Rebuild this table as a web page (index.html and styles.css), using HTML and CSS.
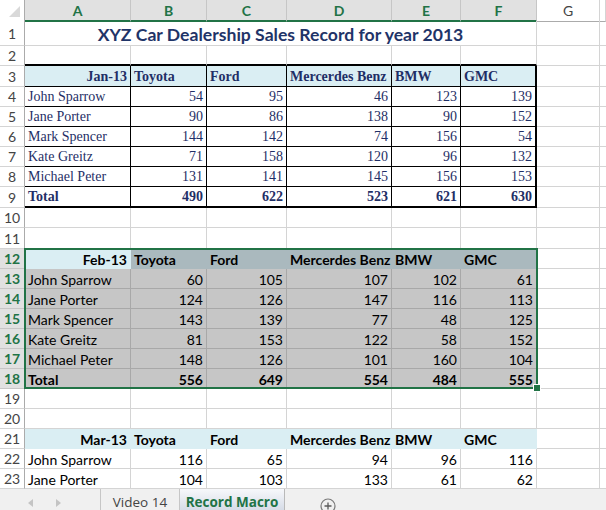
FILE: index.html
```html
<!DOCTYPE html>
<html>
<head>
<meta charset="utf-8">
<link rel="stylesheet" href="styles.css">
</head>
<body>
<div class="sheet">
  <div class="row h21 colhdr">
    <div class="corner"><svg width="25" height="21" viewBox="0 0 25 21"><polygon points="20,6 20,17 9,17" fill="#d9d9d9"/></svg></div>
    <div class="ch sel">A</div><div class="ch sel">B</div><div class="ch sel">C</div><div class="ch sel">D</div><div class="ch sel">E</div><div class="ch sel">F</div><div class="ch">G</div><div class="ch"></div>
  </div>
  <div class="row h25">
    <div class="rh">1</div>
    <div class="c title">XYZ Car Dealership Sales Record for year 2013</div>
    <div class="c"></div><div class="c"></div>
  </div>
  <div class="row h20">
    <div class="rh">2</div>
    <div class="c tb"></div><div class="c tb"></div><div class="c tb"></div><div class="c tb"></div><div class="c tb"></div><div class="c tb"></div><div class="c"></div><div class="c"></div>
  </div>
  <div class="row h21">
    <div class="rh">3</div>
    <div class="c j jh n">Jan-13</div><div class="c j jh">Toyota</div><div class="c j jh">Ford</div><div class="c j jh">Mercerdes Benz</div><div class="c j jh">BMW</div><div class="c j jh jr">GMC</div><div class="c"></div><div class="c"></div>
  </div>
  <div class="row h20">
    <div class="rh">4</div>
    <div class="c j">John Sparrow</div><div class="c j n">54</div><div class="c j n">95</div><div class="c j n">46</div><div class="c j n">123</div><div class="c j n jr">139</div><div class="c"></div><div class="c"></div>
  </div>
  <div class="row h20">
    <div class="rh">5</div>
    <div class="c j">Jane Porter</div><div class="c j n">90</div><div class="c j n">86</div><div class="c j n">138</div><div class="c j n">90</div><div class="c j n jr">152</div><div class="c"></div><div class="c"></div>
  </div>
  <div class="row h20">
    <div class="rh">6</div>
    <div class="c j">Mark Spencer</div><div class="c j n">144</div><div class="c j n">142</div><div class="c j n">74</div><div class="c j n">156</div><div class="c j n jr">54</div><div class="c"></div><div class="c"></div>
  </div>
  <div class="row h20">
    <div class="rh">7</div>
    <div class="c j">Kate Greitz</div><div class="c j n">71</div><div class="c j n">158</div><div class="c j n">120</div><div class="c j n">96</div><div class="c j n jr">132</div><div class="c"></div><div class="c"></div>
  </div>
  <div class="row h20">
    <div class="rh">8</div>
    <div class="c j">Michael Peter</div><div class="c j n">131</div><div class="c j n">141</div><div class="c j n">145</div><div class="c j n">156</div><div class="c j n jr">153</div><div class="c"></div><div class="c"></div>
  </div>
  <div class="row h21">
    <div class="rh">9</div>
    <div class="c j jb jt">Total</div><div class="c j jb jt n">490</div><div class="c j jb jt n">622</div><div class="c j jb jt n">523</div><div class="c j jb jt n">621</div><div class="c j jb jt n jr">630</div><div class="c"></div><div class="c"></div>
  </div>
  <div class="row h20">
    <div class="rh">10</div>
    <div class="c"></div><div class="c"></div><div class="c"></div><div class="c"></div><div class="c"></div><div class="c"></div><div class="c"></div><div class="c"></div>
  </div>
  <div class="row h21">
    <div class="rh">11</div>
    <div class="c"></div><div class="c"></div><div class="c"></div><div class="c"></div><div class="c"></div><div class="c"></div><div class="c"></div><div class="c"></div>
  </div>
  <div class="row h20">
    <div class="rh rsel">12</div>
    <div class="c hd active n">Feb-13</div><div class="c hd fh">Toyota</div><div class="c hd fh">Ford</div><div class="c hd fh">Mercerdes Benz</div><div class="c hd fh">BMW</div><div class="c hd fh">GMC</div><div class="c"></div><div class="c"></div>
  </div>
  <div class="row h20">
    <div class="rh rsel">13</div>
    <div class="c fs">John Sparrow</div><div class="c fs n">60</div><div class="c fs n">105</div><div class="c fs n">107</div><div class="c fs n">102</div><div class="c fs n">61</div><div class="c"></div><div class="c"></div>
  </div>
  <div class="row h20">
    <div class="rh rsel">14</div>
    <div class="c fs">Jane Porter</div><div class="c fs n">124</div><div class="c fs n">126</div><div class="c fs n">147</div><div class="c fs n">116</div><div class="c fs n">113</div><div class="c"></div><div class="c"></div>
  </div>
  <div class="row h20">
    <div class="rh rsel">15</div>
    <div class="c fs">Mark Spencer</div><div class="c fs n">143</div><div class="c fs n">139</div><div class="c fs n">77</div><div class="c fs n">48</div><div class="c fs n">125</div><div class="c"></div><div class="c"></div>
  </div>
  <div class="row h20">
    <div class="rh rsel">16</div>
    <div class="c fs">Kate Greitz</div><div class="c fs n">81</div><div class="c fs n">153</div><div class="c fs n">122</div><div class="c fs n">58</div><div class="c fs n">152</div><div class="c"></div><div class="c"></div>
  </div>
  <div class="row h20">
    <div class="rh rsel">17</div>
    <div class="c fs">Michael Peter</div><div class="c fs n">148</div><div class="c fs n">126</div><div class="c fs n">101</div><div class="c fs n">160</div><div class="c fs n">104</div><div class="c"></div><div class="c"></div>
  </div>
  <div class="row h20">
    <div class="rh rsel">18</div>
    <div class="c fs hd">Total</div><div class="c fs hd n">556</div><div class="c fs hd n">649</div><div class="c fs hd n">554</div><div class="c fs hd n">484</div><div class="c fs hd n">555</div><div class="c"></div><div class="c"></div>
  </div>
  <div class="row h20">
    <div class="rh">19</div>
    <div class="c"></div><div class="c"></div><div class="c"></div><div class="c"></div><div class="c"></div><div class="c"></div><div class="c"></div><div class="c"></div>
  </div>
  <div class="row h20">
    <div class="rh">20</div>
    <div class="c"></div><div class="c"></div><div class="c"></div><div class="c"></div><div class="c"></div><div class="c"></div><div class="c"></div><div class="c"></div>
  </div>
  <div class="row h20">
    <div class="rh">21</div>
    <div class="c hd mh n">Mar-13</div><div class="c hd mh">Toyota</div><div class="c hd mh">Ford</div><div class="c hd mh">Mercerdes Benz</div><div class="c hd mh">BMW</div><div class="c hd mh">GMC</div><div class="c"></div><div class="c"></div>
  </div>
  <div class="row h20">
    <div class="rh">22</div>
    <div class="c">John Sparrow</div><div class="c n">116</div><div class="c n">65</div><div class="c n">94</div><div class="c n">96</div><div class="c n">116</div><div class="c"></div><div class="c"></div>
  </div>
  <div class="row h20">
    <div class="rh">23</div>
    <div class="c">Jane Porter</div><div class="c n">104</div><div class="c n">103</div><div class="c n">133</div><div class="c n">61</div><div class="c n">62</div><div class="c"></div><div class="c"></div>
  </div>
  <div class="selection"><div class="handle"></div></div>
</div>
<div class="tabs">
  <div class="nav">
    <svg width="100" height="21" viewBox="0 0 100 21"><polygon points="33,10 33,18 28,14" fill="#c4c4c4"/><polygon points="56,10 56,18 61,14" fill="#c4c4c4"/></svg>
  </div>
  <div class="tab">Video 14</div>
  <div class="tab active">Record Macro</div>
  <div class="add"><svg width="16" height="16" viewBox="0 0 16 16"><circle cx="8" cy="8" r="7" fill="none" stroke="#7a7a7a" stroke-width="1.2"/><path d="M8 4.5V11.5M4.5 8H11.5" stroke="#5a5a5a" stroke-width="1.3"/></svg></div>
</div>
</body>
</html>
```
FILE: styles.css
```css
html, body {
  margin: 0;
  padding: 0;
}
body {
  width: 606px;
  height: 510px;
  overflow: hidden;
  background: #fff;
  font-family: Lato, "Liberation Sans", sans-serif;
  color: #000;
}
.sheet {
  position: relative;
}
.row {
  display: grid;
  grid-template-columns: 25px 106px 76px 80px 105px 69px 76px 63px 6px;
}
.h20 { height: 20px; }
.h21 { height: 21px; }
.h25 { height: 25px; }

.corner {
  box-sizing: border-box;
  border-right: 1px solid #ababab;
  border-bottom: 1px solid #ababab;
  background: #fff;
}
.corner svg { display: block; }
.ch {
  box-sizing: border-box;
  display: flex;
  align-items: center;
  justify-content: center;
  font-size: 14px;
  color: #444;
  background: #fff;
  border-right: 1px solid #d4d4d4;
  border-bottom: 1px solid #ababab;
}
.ch.sel {
  background: #e1e1e1;
  color: #217346;
  font-weight: bold;
  border-right-color: #c6c6c6;
  border-bottom: 2px solid #217346;
}
.rh {
  box-sizing: border-box;
  display: flex;
  align-items: center;
  justify-content: center;
  font-size: 14px;
  color: #444;
  background: #fff;
  border-right: 1px solid #ababab;
  border-bottom: 1px solid #d4d4d4;
}
.rh.rsel {
  background: #e1e1e1;
  color: #217346;
  font-weight: bold;
  border-bottom-color: #c6c6c6;
}
.c {
  box-sizing: border-box;
  display: flex;
  align-items: center;
  padding: 1px 3px 0 3px;
  font-size: 14px;
  white-space: nowrap;
  overflow: hidden;
  border-right: 1px solid #d4d4d4;
  border-bottom: 1px solid #d4d4d4;
}
.n { justify-content: flex-end; }

.title {
  grid-column: span 6;
  justify-content: center;
  padding-top: 3px;
  font-size: 17.6px;
  font-weight: bold;
  color: #1f3468;
}

/* January table */
.tb { border-bottom: 2px solid #000; }
.j {
  font-family: "Liberation Serif", serif;
  font-size: 14px;
  color: #1f2f66;
  border-right-color: #000;
  border-bottom-color: #000;
}
.jh {
  background: #daeef3;
  font-weight: bold;
}
.jt { font-weight: bold; }
.jb { border-bottom: 2px solid #000; }
.jr { border-right: 2px solid #000; }

/* February (selected) table */
.hd { font-weight: bold; }
.active {
  background: #daeef3;
  border-right-color: #daeef3;
  border-bottom-color: #daeef3;
}
.fh {
  background: #aab9be;
  border-right-color: #aab9be;
  border-bottom-color: #aab9be;
}
.fs {
  background: #c6c6c6;
  border-right-color: #a8a8a8;
  border-bottom-color: #a8a8a8;
}

/* March table */
.mh {
  background: #daeef3;
  border-right-color: #daeef3;
  border-bottom-color: #daeef3;
}

.selection {
  position: absolute;
  left: 24px;
  top: 248px;
  width: 514px;
  height: 141px;
  box-sizing: border-box;
  border: 2px solid #217346;
}
.handle {
  position: absolute;
  right: -5px;
  bottom: -5px;
  width: 6px;
  height: 6px;
  background: #217346;
  border: 1px solid #fff;
}

/* sheet tabs */
.tabs {
  display: flex;
  height: 21px;
  background: #f0f0f0;
  font-family: "Open Sans", "Noto Sans", sans-serif;
  font-size: 13.5px;
}
.nav {
  width: 100px;
  border-right: 1px solid #c6c6c6;
}
.nav svg { display: block; }
.tab {
  display: flex;
  align-items: flex-end;
  justify-content: center;
  color: #444;
  width: 78px;
  line-height: 16px;
}
.tab.active {
  width: 104px;
  color: #217346;
  font-weight: bold;
  background: linear-gradient(#f7f8fb, #d6dce7);
  border-right: 1px solid #b9b9b9;
  border-left: 1px solid #c6c6c6;
}
.add {
  padding: 9px 0 0 35px;
}
.add svg { display: block; }
```
